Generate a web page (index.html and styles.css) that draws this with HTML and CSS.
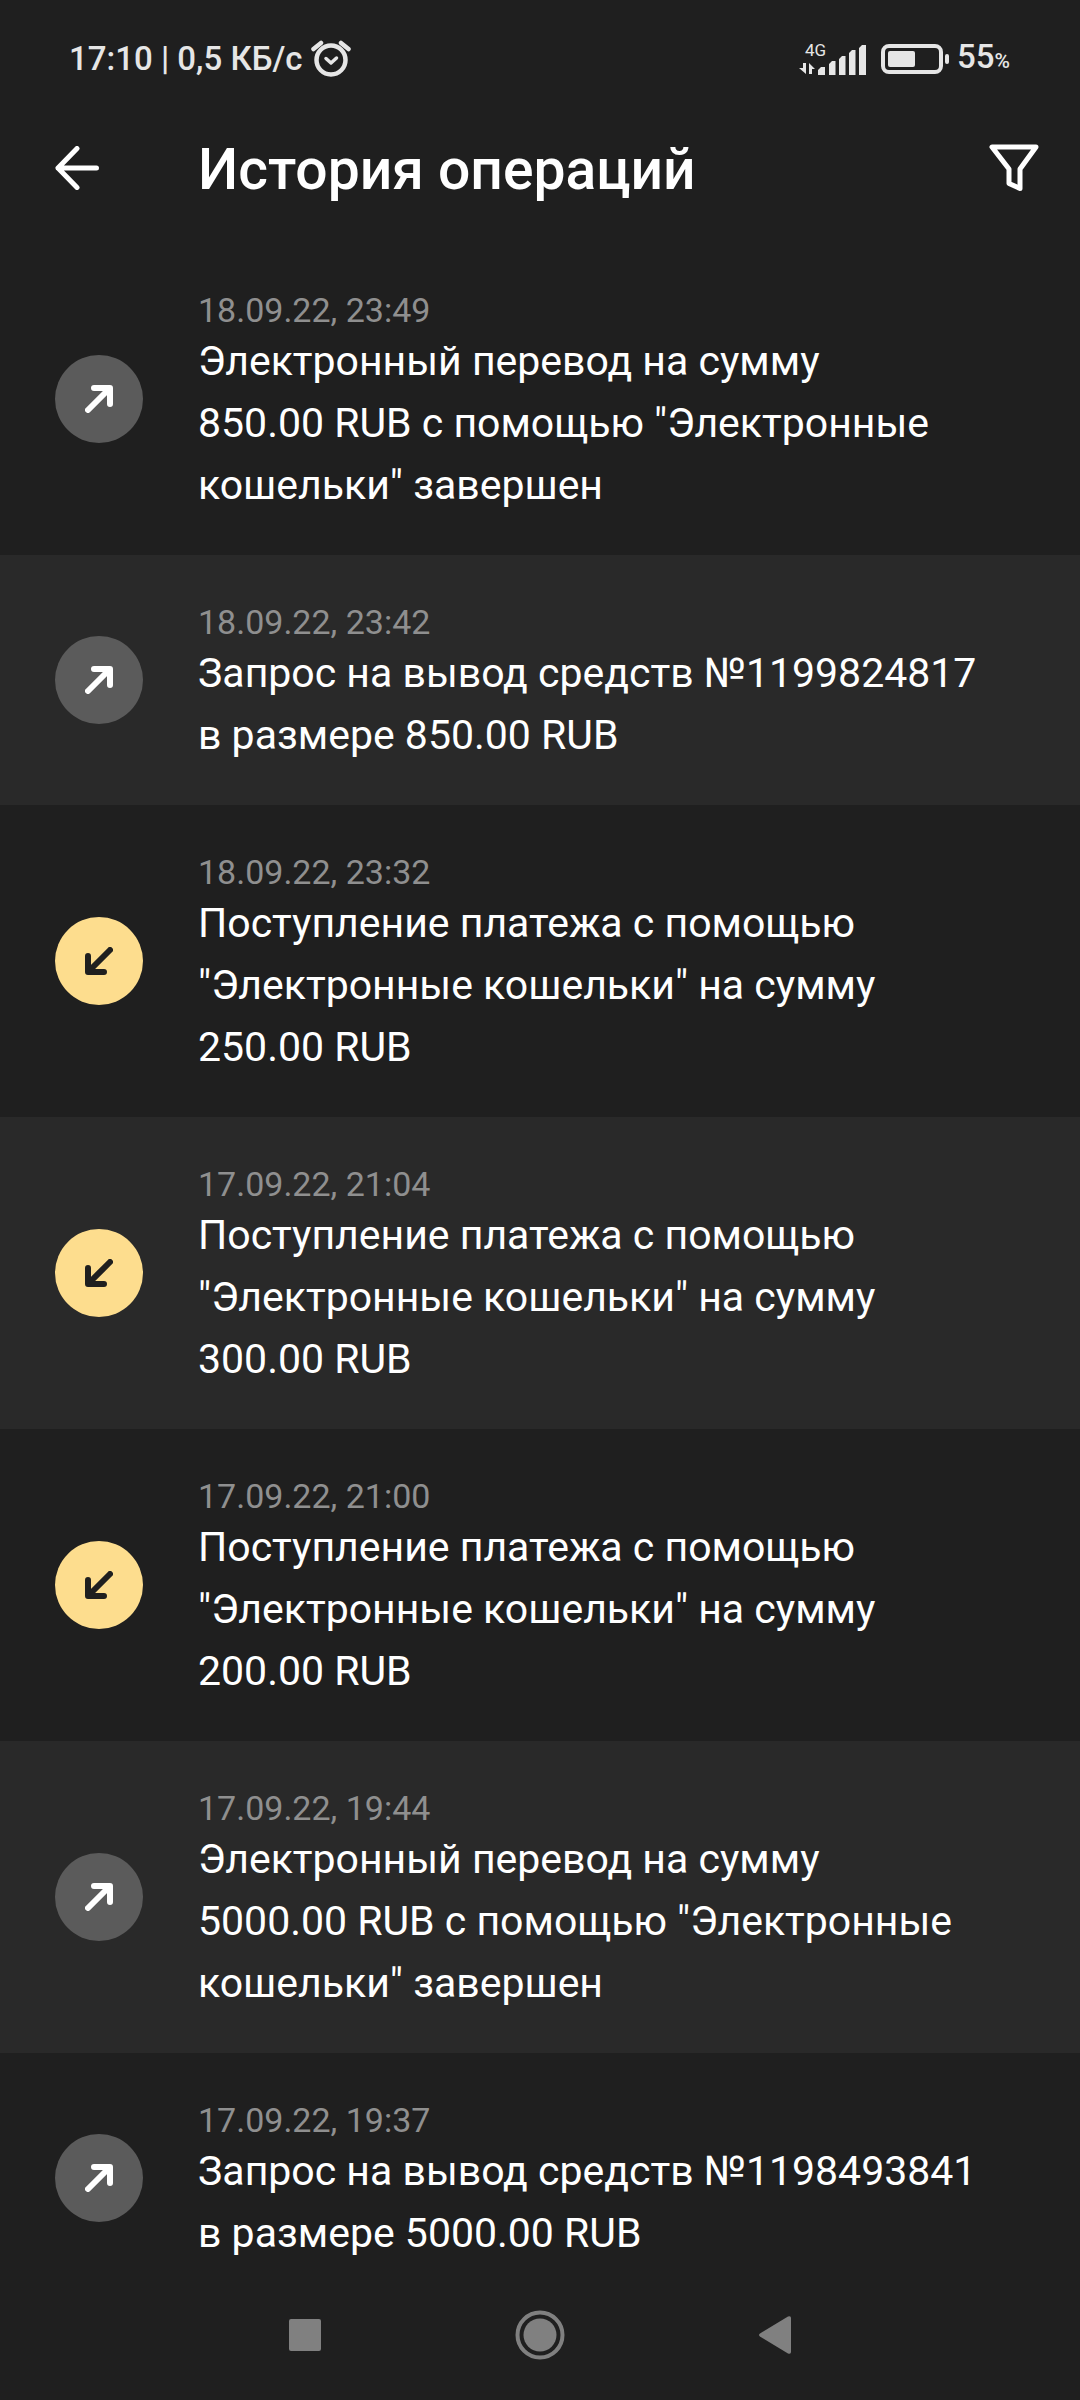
FILE: index.html
```html
<!DOCTYPE html>
<html lang="ru">
<head>
<meta charset="utf-8">
<meta name="viewport" content="width=device-width, initial-scale=1">
<title>История операций</title>
<link rel="stylesheet" href="styles.css">
</head>
<body>
<svg class="defs" aria-hidden="true">
  <symbol id="arrow-out" viewBox="0 0 28 28"><path d="M3 25 24 4M9 3H25V19" /></symbol>
  <symbol id="arrow-in" viewBox="0 0 28 28"><path d="M25 3 4 24M3 9V25H19" /></symbol>
</svg>
<div class="app">
  <div class="status">
    <div class="status-group">
      <span>17:10 | 0,5 КБ/с</span>
      <svg class="alarm" width="40" height="38" viewBox="0 0 40 38" aria-hidden="true">
        <circle cx="20" cy="20" r="14.5" stroke-width="4.5"/>
        <path d="M2.5 9 10 3M37.5 9 30 3" stroke-width="4.5"/>
        <path d="M15 18.5 20 23 25.5 18" stroke-width="3.5"/>
      </svg>
    </div>
    <div class="status-group">
      <div class="network">
        <span class="network-type">4G</span>
        <svg width="68" height="34" viewBox="0 0 68 34" aria-hidden="true">
          <path d="M4 21H7V32L0 26H4ZM10 32V21L16 27H13V32Z"/>
          <path d="M19 33V28L22 25H26V33ZM30 33V22L33 19H36.5V33ZM40 33V17L43 14H46.5V33ZM50 33V11L53 8H56.5V33ZM60 33V6L63 3H67V33Z"/>
        </svg>
      </div>
      <svg class="battery" width="68" height="30" viewBox="0 0 68 30" aria-hidden="true">
        <rect x="2" y="2" width="58" height="26" rx="6" fill="none" stroke="currentColor" stroke-width="4"/>
        <rect x="7" y="7" width="27" height="16" rx="2"/>
        <rect x="64" y="10" width="4" height="10" rx="2"/>
      </svg>
      <span class="level">55<small>%</small></span>
    </div>
  </div>
  <header class="header">
    <button class="icon-button back" type="button" aria-label="Назад">
      <svg width="44" height="44" viewBox="0 0 44 44"><path d="M22 2.5 3 22 22 41.5M3 22H41.5"/></svg>
    </button>
    <h1>История операций</h1>
    <button class="icon-button" type="button" aria-label="Фильтр">
      <svg width="50" height="48" viewBox="0 0 50 48"><path d="M3 3H47L31 25V44.5L20 39.5V25Z"/></svg>
    </button>
  </header>
  <main class="list">
    <article class="row">
      <div class="badge"><svg><use href="#arrow-out"/></svg></div>
      <div><time>18.09.22, 23:49</time><p>Электронный перевод на сумму 850.00&nbsp;RUB с помощью "Электронные кошельки" завершен</p></div>
    </article>
    <article class="row">
      <div class="badge"><svg><use href="#arrow-out"/></svg></div>
      <div><time>18.09.22, 23:42</time><p>Запрос на вывод средств №1199824817 в размере 850.00&nbsp;RUB</p></div>
    </article>
    <article class="row">
      <div class="badge in"><svg><use href="#arrow-in"/></svg></div>
      <div><time>18.09.22, 23:32</time><p>Поступление платежа с помощью "Электронные кошельки" на сумму 250.00&nbsp;RUB</p></div>
    </article>
    <article class="row">
      <div class="badge in"><svg><use href="#arrow-in"/></svg></div>
      <div><time>17.09.22, 21:04</time><p>Поступление платежа с помощью "Электронные кошельки" на сумму 300.00&nbsp;RUB</p></div>
    </article>
    <article class="row">
      <div class="badge in"><svg><use href="#arrow-in"/></svg></div>
      <div><time>17.09.22, 21:00</time><p>Поступление платежа с помощью "Электронные кошельки" на сумму 200.00&nbsp;RUB</p></div>
    </article>
    <article class="row">
      <div class="badge"><svg><use href="#arrow-out"/></svg></div>
      <div><time>17.09.22, 19:44</time><p>Электронный перевод на сумму 5000.00&nbsp;RUB с помощью "Электронные кошельки" завершен</p></div>
    </article>
    <article class="row">
      <div class="badge"><svg><use href="#arrow-out"/></svg></div>
      <div><time>17.09.22, 19:37</time><p>Запрос на вывод средств №1198493841 в размере 5000.00&nbsp;RUB</p></div>
    </article>
  </main>
  <nav class="system-nav">
    <button type="button" aria-label="Недавние приложения"><svg width="32" height="32" viewBox="0 0 32 32"><rect width="32" height="32" rx="2"/></svg></button>
    <button type="button" aria-label="Домой"><svg width="50" height="50" viewBox="0 0 50 50"><circle cx="25" cy="25" r="16.5"/><circle cx="25" cy="25" r="22.5" fill="none" stroke="currentColor" stroke-width="4"/></svg></button>
    <button type="button" aria-label="Назад"><svg width="32" height="38" viewBox="0 0 32 38"><path d="M1 17.5 29 0.5Q32 -0.5 32 2V36Q32 38.5 29 37.5L1 20.5Q-1 19 1 17.5Z"/></svg></button>
  </nav>
</div>
</body>
</html>
```
FILE: styles.css
```css
* { box-sizing: border-box; }

body {
  margin: 0;
  background: #1f1f1f;
  color: #fff;
  font-family: Roboto, "Noto Sans", sans-serif;
}

svg { display: block; flex: none; }

.defs { position: absolute; width: 0; height: 0; }

button {
  display: flex;
  align-items: center;
  justify-content: center;
  padding: 0;
  border: 0;
  background: none;
  color: inherit;
}

.app {
  display: flex;
  flex-direction: column;
  height: 100vh;
}

.status {
  display: flex;
  align-items: center;
  justify-content: space-between;
  height: 98px;
  padding: 20px 70px 0 69px;
  color: #e6e6e6;
  font-size: 33px;
  font-weight: 500;
  line-height: 40px;
}

.status-group { display: flex; align-items: center; gap: 8px; }

.alarm { fill: none; stroke: currentColor; stroke-linecap: round; stroke-linejoin: round; }

.network { position: relative; fill: currentColor; }

.network-type {
  position: absolute;
  left: 6px;
  top: -2px;
  font-size: 17px;
  font-weight: 400;
  line-height: 20px;
}

.battery { margin-left: 6px; fill: currentColor; }

.level small { font-size: 21px; }

.header {
  display: flex;
  align-items: center;
  height: 145px;
  padding: 0 41px 5px 55px;
}

.header h1 {
  flex: 1;
  margin: 0;
  padding-top: 4px;
  font-size: 57px;
  font-weight: 500;
  line-height: 64px;
}

.icon-button svg {
  fill: none;
  stroke: currentColor;
  stroke-width: 5;
  stroke-linecap: round;
  stroke-linejoin: round;
}

.back { width: 143px; justify-content: flex-start; }

.list {
  flex: 1;
  min-height: 0;
  overflow-y: auto;
  scrollbar-width: none;
}

.row {
  display: grid;
  grid-template-columns: 88px 1fr;
  align-items: center;
  column-gap: 55px;
  padding: 48px 72px 39px 55px;
}

.row:nth-child(even) { background: #292929; }

.row time {
  display: block;
  color: #8f8f8f;
  font-size: 34px;
  line-height: 39px;
}

.row p {
  margin: 0;
  font-size: 41px;
  line-height: 62px;
}

.badge {
  display: grid;
  place-items: center;
  height: 88px;
  margin-bottom: 9px;
  border-radius: 50%;
  background: #5b5b5b;
}

.badge svg {
  width: 28px;
  height: 28px;
  fill: none;
  stroke: currentColor;
  stroke-width: 6;
  stroke-linecap: round;
  stroke-linejoin: round;
}

.badge.in { background: #fddd8e; color: #1f1f1f; }

.system-nav {
  display: grid;
  grid-template-columns: repeat(3, 1fr);
  flex: none;
  height: 130px;
  padding: 0 17.4%;
  color: #808080;
  fill: currentColor;
}
```
